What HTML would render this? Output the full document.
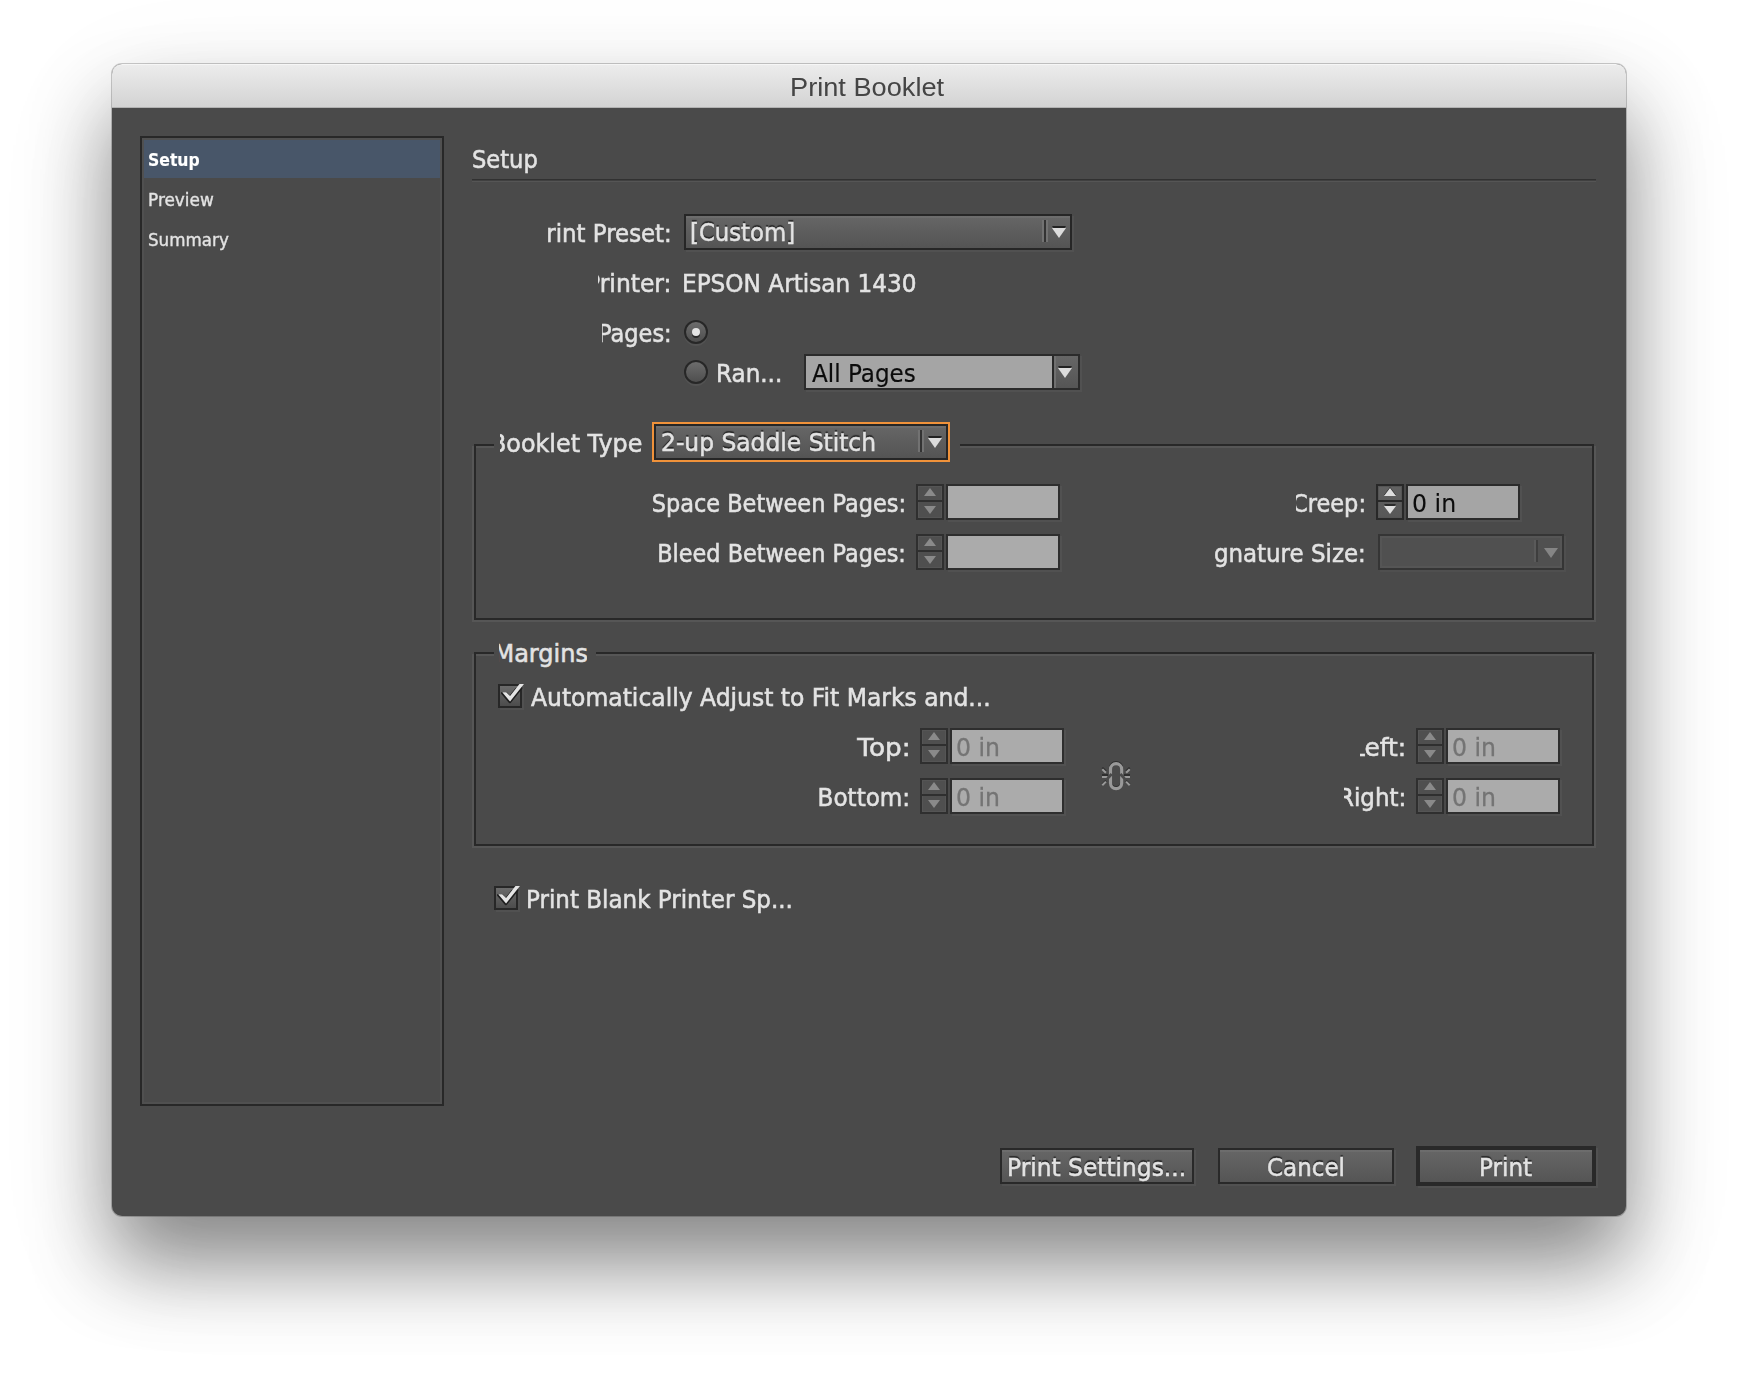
<!DOCTYPE html>
<html><head><meta charset="utf-8"><title>Print Booklet</title>
<style>
*{box-sizing:border-box;margin:0;padding:0}
html,body{width:1738px;height:1376px;overflow:hidden;background:#fff}
body{position:relative;font-family:"DejaVu Sans","Liberation Sans",sans-serif;font-size:24px;color:#e3e3e3}
#win{position:absolute;left:112px;top:64px;width:1514px;height:1152px;border-radius:10px;background:#4a4a4a;
 box-shadow:0 0 0 1px rgba(0,0,0,.20),0 48px 80px 0px rgba(0,0,0,.42),0 36px 120px 0px rgba(0,0,0,.10)}
#tb{position:absolute;left:112px;top:64px;width:1514px;height:44px;border-radius:10px 10px 0 0;
 background:linear-gradient(#ececec,#d3d3d3);border-top:1px solid #f6f6f6;border-bottom:1px solid #b2b2b2}
#title{position:absolute;left:112px;top:64px;width:1514px;height:44px;line-height:45px;text-align:center;
 font-family:"Liberation Sans",sans-serif;font-size:26px;color:#4b4b4b}
.x{position:absolute;white-space:nowrap;line-height:36px;height:36px;transform-origin:0 50%;-webkit-text-stroke:0.55px currentColor;padding-top:2px;margin-top:-1px}
.c{position:absolute;overflow:hidden;height:36px}
.c .x{left:auto;right:0;top:0;transform-origin:100% 50%}
#side{position:absolute;left:140px;top:136px;width:304px;height:970px;border:2px solid #282828;box-shadow:inset 0 0 0 2px #505050}
#sel{position:absolute;left:144px;top:140px;width:296px;height:38px;background:#485669}
.sb{font-size:18px}
.ttl{font-family:"Liberation Sans",sans-serif;font-size:26px;color:#454545}
.line{position:absolute;background:#2b2b2b}
.dd{position:absolute;height:36px;border:2px solid #262626;background:linear-gradient(#666,#545454);box-shadow:2px 2px 0 rgba(255,255,255,.045),inset 0 2px 0 rgba(255,255,255,.05)}
.dd.dis{border-color:#353535;background:#505050;box-shadow:2px 2px 0 rgba(255,255,255,.03),inset 0 0 0 2px #555}
.sep{position:absolute;top:4px;width:6px;height:22px;right:22px;background:linear-gradient(90deg,#727272 0 2px,#333 2px 4px,#727272 4px 6px)}
.dis .sep{background:linear-gradient(90deg,#5a5a5a 0 2px,#3e3e3e 2px 4px,#505050 4px 6px);width:4px;right:24px}
.arr{position:absolute;width:0;height:0;border-left:7px solid transparent;border-right:7px solid transparent;border-top:10px solid #dcdcdc;filter:drop-shadow(0 -2px 0 #222)}
.dis .arr{border-top-color:#858585;filter:none}
.fld{position:absolute;height:36px;border:2px solid #2e2e2e;background:#ababab;box-shadow:2px 2px 0 rgba(255,255,255,.04)}
.fld.en{background:#a5a5a5;border-color:#2b2b2b}
.sp{position:absolute;width:28px;height:36px;border:2px solid #2f2f2f;background:#4f4f4f;box-shadow:inset 0 0 0 1px #555}
.sp i{position:absolute;left:0;top:14px;width:24px;height:2px;background:#2f2f2f}
.sp b{position:absolute;left:6px;width:0;height:0;border-left:6px solid transparent;border-right:6px solid transparent}
.sp .u{top:2px;border-bottom:8px solid #8a8a8a}
.sp .d{top:20px;border-top:8px solid #8a8a8a}
.sp.en{background:linear-gradient(#626262,#575757);border-color:#282828}
.sp.en i{background:#282828}
.sp.en .u{border-bottom-color:#dedede;filter:drop-shadow(0 -1px 0 #2a2a2a)}
.sp.en .d{border-top-color:#dedede;filter:drop-shadow(0 -2px 0 #2a2a2a)}
.cb{position:absolute;width:24px;height:24px;border:2px solid #272727;background:linear-gradient(#6b6b6b,#4c4c4c);box-shadow:2px 2px 0 rgba(255,255,255,.04)}
.rd{position:absolute;width:24px;height:24px;border-radius:50%;border:2px solid #272727;background:linear-gradient(#6c6c6c,#4e4e4e);box-shadow:0 2px 0 rgba(255,255,255,.05)}
.rd u{position:absolute;left:6px;top:6px;width:8px;height:8px;border-radius:50%;background:#e4e4e4;box-shadow:0 2px 0 #2a2a2a}
.btn{position:absolute;height:36px;border:2px solid #292929;background:linear-gradient(#666,#555);box-shadow:2px 2px 0 rgba(255,255,255,.04),inset 0 2px 0 rgba(255,255,255,.05)}
.btn.def{border-width:4px;height:40px}
.gb{position:absolute;border:2px solid #282828}
.gl{position:absolute;border:2px solid #565656}
.mask{position:absolute;background:#4a4a4a}
.blk{color:#0c0c0c}
.dim{color:#747474}
.sh{text-shadow:0 -2px 1px rgba(0,0,0,.6)}
</style></head><body>
<div id="win"></div><div id="tb"></div>
<div class="x ttl" style="left:789.81px;top:67.6px;transform:scaleX(1.0453);-webkit-text-stroke-width:0px;">Print Booklet</div>
<div id="side"></div><div id="sel"></div>
<div class="x sb" style="left:147.51px;top:141px;transform:scaleX(0.8696);-webkit-text-stroke-width:0.15px;font-weight:bold;color:#fff">Setup</div>
<div class="x sb" style="left:147.96px;top:181px;transform:scaleX(0.9379);-webkit-text-stroke-width:0.4px;">Preview</div>
<div class="x sb" style="left:147.57px;top:221px;transform:scaleX(0.9290);-webkit-text-stroke-width:0.4px;">Summary</div>
<div class="x " style="left:471.73px;top:141px;transform:scaleX(0.9413);">Setup</div>
<div class="line" style="left:472px;top:179px;width:1124px;height:3px;background:linear-gradient(#313131 0 1px,#404040 1px 2px,#555 2px 3px)"></div>
<div class="c" style="left:547px;top:215px;width:125px;height:36px"><div class="x " style="transform:scaleX(0.9521);">Print Preset:</div></div>
<div class="dd" style="left:684px;top:214px;width:388px"><div class="sep"></div><div class="arr" style="right:4px;top:12px"></div></div>
<div class="x sh" style="left:690.38px;top:214px;transform:scaleX(0.9491);">[Custom]</div>
<div class="c" style="left:598px;top:265px;width:74px;height:36px"><div class="x " style="transform:scaleX(0.9773);">Printer:</div></div>
<div class="x " style="left:681.54px;top:265px;transform:scaleX(0.9657);">EPSON Artisan 1430</div>
<div class="c" style="left:602px;top:315px;width:70px;height:36px"><div class="x " style="transform:scaleX(0.9367);">Pages:</div></div>
<div class="rd" style="left:684px;top:320px"><u></u></div>
<div class="rd" style="left:684px;top:360px"></div>
<div class="x " style="left:715.85px;top:355px;transform:scaleX(0.9606);">Ran...</div>
<div class="fld en" style="left:804px;top:354px;width:276px"><div style="position:absolute;right:0;top:0;width:26px;height:32px;border-left:2px solid #292929;background:linear-gradient(#666,#555);box-shadow:inset 2px 0 0 #707070"><div class="arr" style="left:4px;top:12px"></div></div></div>
<div class="x blk" style="left:812.00px;top:355px;transform:scaleX(0.9611);-webkit-text-stroke-width:0.2px;">All Pages</div>
<div class="gl" style="left:472px;top:446px;width:1124px;height:176px"></div><div class="gb" style="left:474px;top:444px;width:1120px;height:176px"></div>
<div class="mask" style="left:494px;top:440px;width:466px;height:10px"></div>
<div class="c" style="left:500px;top:425px;width:142px;height:36px"><div class="x " style="transform:scaleX(0.9935);">Booklet Type</div></div>
<div class="dd" style="left:654px;top:424px;width:294px;box-shadow:0 0 0 2px #f0923a,inset 0 2px 0 rgba(255,255,255,.05)"><div class="sep"></div><div class="arr" style="right:4px;top:12px"></div></div>
<div class="x sh" style="left:660.50px;top:424px;transform:scaleX(0.9746);">2-up Saddle Stitch</div>
<div class="c" style="left:640px;top:485px;width:266px;height:36px"><div class="x " style="transform:scaleX(0.9349);">Space Between Pages:</div></div>
<div class="sp" style="left:916px;top:484px"><b class="u"></b><i></i><b class="d"></b></div><div class="fld" style="left:946px;top:484px;width:114px"></div>
<div class="c" style="left:640px;top:535px;width:266px;height:36px"><div class="x " style="transform:scaleX(0.9315);">Bleed Between Pages:</div></div>
<div class="sp" style="left:916px;top:534px"><b class="u"></b><i></i><b class="d"></b></div><div class="fld" style="left:946px;top:534px;width:114px"></div>
<div class="c" style="left:1296px;top:485px;width:70px;height:36px"><div class="x " style="transform:scaleX(0.9367);">Creep:</div></div>
<div class="sp en" style="left:1376px;top:484px"><b class="u"></b><i></i><b class="d"></b></div><div class="fld en" style="left:1406px;top:484px;width:114px"></div>
<div class="x blk" style="left:1411.96px;top:485px;transform:scaleX(0.9867);-webkit-text-stroke-width:0.1px;">0 in</div>
<div class="c" style="left:1213px;top:535px;width:153px;height:36px"><div class="x " style="transform:scaleX(0.9558);">Signature Size:</div></div>
<div class="dd dis" style="left:1378px;top:534px;width:186px"><div class="sep"></div><div class="arr" style="right:4px;top:12px"></div></div>
<div class="gl" style="left:472px;top:654px;width:1124px;height:194px"></div><div class="gb" style="left:474px;top:652px;width:1120px;height:194px"></div>
<div class="mask" style="left:494px;top:648px;width:102px;height:10px"></div>
<div class="c" style="left:499px;top:635px;width:88px;height:36px"><div class="x " style="right:-9px">Margins:</div></div>
<div class="cb" style="left:498px;top:684px"></div>
<div class="x " style="left:530.67px;top:679px;transform:scaleX(0.9772);">Automatically Adjust to Fit Marks and...</div>
<div class="c" style="left:850px;top:729px;width:60.5px;height:36px"><div class="x " style="transform:scaleX(1.0959);">Top:</div></div>
<div class="sp" style="left:920px;top:728px"><b class="u"></b><i></i><b class="d"></b></div><div class="fld" style="left:950px;top:728px;width:114px"></div>
<div class="x dim" style="left:956.07px;top:729px;transform:scaleX(0.9820);-webkit-text-stroke-width:0.3px;">0 in</div>
<div class="c" style="left:810px;top:779px;width:100.5px;height:36px"><div class="x " style="transform:scaleX(0.9625);">Bottom:</div></div>
<div class="sp" style="left:920px;top:778px"><b class="u"></b><i></i><b class="d"></b></div><div class="fld" style="left:950px;top:778px;width:114px"></div>
<div class="x dim" style="left:956.07px;top:779px;transform:scaleX(0.9820);-webkit-text-stroke-width:0.3px;">0 in</div>
<div class="c" style="left:1360px;top:729px;width:46px;height:36px"><div class="x " style="transform:scaleX(1.0377);">Left:</div></div>
<div class="sp" style="left:1416px;top:728px"><b class="u"></b><i></i><b class="d"></b></div><div class="fld" style="left:1446px;top:728px;width:114px"></div>
<div class="x dim" style="left:1452.07px;top:729px;transform:scaleX(0.9820);-webkit-text-stroke-width:0.3px;">0 in</div>
<div class="c" style="left:1344px;top:779px;width:62px;height:36px"><div class="x " style="transform:scaleX(0.9577);">Right:</div></div>
<div class="sp" style="left:1416px;top:778px"><b class="u"></b><i></i><b class="d"></b></div><div class="fld" style="left:1446px;top:778px;width:114px"></div>
<div class="x dim" style="left:1452.07px;top:779px;transform:scaleX(0.9820);-webkit-text-stroke-width:0.3px;">0 in</div>
<svg style="position:absolute;left:1098px;top:758px" width="36" height="36" viewBox="1098 758 36 36">
<g fill="none" stroke="#2e2e2e" stroke-width="3.2"><rect x="1110.5" y="762.6" width="11.2" height="25" rx="5.6"/></g>
<g stroke="#2e2e2e" stroke-width="2"><path d="M1102 775h6M1124 775h6M1102.3 767.6l3.6 3.6M1102.3 784.4l3.6-3.6M1129.7 767.6l-3.6 3.6M1129.7 784.4l-3.6-3.6"/></g>
<g fill="none" stroke="#999" stroke-width="3.2"><rect x="1110.5" y="763.7" width="11.2" height="25" rx="5.6"/></g>
<g stroke="#999" stroke-width="2"><path d="M1102 777h6M1124 777h6M1102.3 769.2l3.6 3.6M1102.3 785.2l3.6-3.6M1129.7 769.2l-3.6 3.6M1129.7 785.2l-3.6-3.6"/></g>
<path d="M1107.5 778.5l4.2-4.5M1124.5 778.5l-4.2-4.5" stroke="#4a4a4a" stroke-width="2.8"/>
</svg>
<div class="cb" style="left:494px;top:886px"></div>
<div class="x " style="left:526.06px;top:881px;transform:scaleX(0.9590);">Print Blank Printer Sp...</div>
<svg style="position:absolute;left:498px;top:680px;overflow:visible" width="32" height="32" viewBox="0 0 32 32"><path d="M4.23 12.22h3.99l3.84 3.84l9.43-11.99h4.48L12.06 21.49z" fill="#1f1f1f" stroke="#1f1f1f" stroke-width="2.2" stroke-linejoin="round" transform="translate(-0.2,0.9)" clip-path="inset(4px 0 0 0)"/><path d="M4.23 12.22h3.99l3.84 3.84l9.43-11.99h4.48L12.06 21.49z" fill="#e5e5e5"/></svg>
<svg style="position:absolute;left:494px;top:882px;overflow:visible" width="32" height="32" viewBox="0 0 32 32"><path d="M4.23 12.22h3.99l3.84 3.84l9.43-11.99h4.48L12.06 21.49z" fill="#1f1f1f" stroke="#1f1f1f" stroke-width="2.2" stroke-linejoin="round" transform="translate(-0.2,0.9)" clip-path="inset(4px 0 0 0)"/><path d="M4.23 12.22h3.99l3.84 3.84l9.43-11.99h4.48L12.06 21.49z" fill="#e5e5e5"/></svg>
<div class="btn" style="left:1000px;top:1148px;width:194px"></div>
<div class="x sh" style="left:1006.93px;top:1148.5px;transform:scaleX(0.9724);">Print Settings...</div>
<div class="btn" style="left:1218px;top:1148px;width:176px"></div>
<div class="x sh" style="left:1266.82px;top:1148.5px;transform:scaleX(0.9595);">Cancel</div>
<div class="btn def" style="left:1416px;top:1146px;width:180px"></div>
<div class="x sh" style="left:1478.75px;top:1148.5px;transform:scaleX(0.9612);">Print</div>
</body></html>
